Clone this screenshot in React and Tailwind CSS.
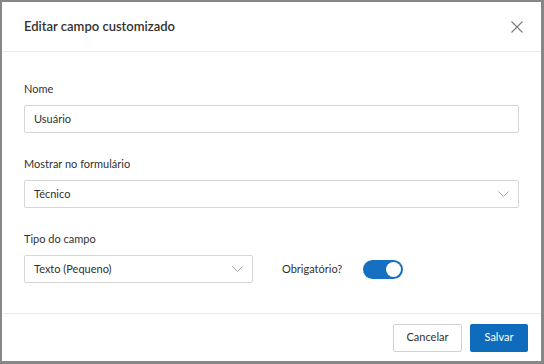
const font = { fontFamily: 'Lato, "Open Sans", sans-serif' }

function Chevron() {
  return (
    <svg width="11" height="7" viewBox="0 0 11 7" fill="none" className="text-[#a6a6a6]">
      <polyline points="0.5,0.5 5.5,5.5 10.5,0.5" stroke="currentColor" strokeWidth="1" />
    </svg>
  )
}

function Field({ label, children }) {
  return (
    <div className="flex flex-col">
      <label className="text-[11px] leading-4 text-[#323130]">{label}</label>
      <div className="mt-[8px]">{children}</div>
    </div>
  )
}

function Select({ value, className = '' }) {
  return (
    <div className={`flex h-[28px] items-center justify-between rounded-[2px] border border-[#d6d6d6] bg-white pl-[9px] pr-[9px] ${className}`}>
      <span className="text-[11px] text-[#323130]">{value}</span>
      <Chevron />
    </div>
  )
}

export default function App() {
  return (
    <div className="h-[364px] w-[544px] bg-[#878787] pl-[2px] pt-[2px]" style={font}>
      <div className="flex h-[359px] w-[539px] flex-col bg-white">
        <div className="flex h-[50px] items-center justify-between border-b border-[#ebebeb] pl-[22px] pr-[18px]">
          <h2 className="text-[13px] font-semibold text-[#323130]">Editar campo customizado</h2>
          <svg width="12" height="12" viewBox="0 0 12 12" className="text-[#7a7a7a]">
            <path d="M0.5 0.5 L11.5 11.5 M11.5 0.5 L0.5 11.5" stroke="currentColor" strokeWidth="1.1" />
          </svg>
        </div>

        <div className="flex flex-1 flex-col gap-[23px] px-[22px] pt-[29px]">
          <Field label="Nome">
            <div className="flex h-[28px] items-center rounded-[2px] border border-[#d6d6d6] pl-[9px]">
              <span className="text-[11px] text-[#323130]">Usuário</span>
            </div>
          </Field>

          <Field label="Mostrar no formulário">
            <Select value="Técnico" />
          </Field>

          <div className="flex flex-col">
            <label className="text-[11px] leading-4 text-[#323130]">Tipo do campo</label>
            <div className="mt-[8px] flex items-center">
              <Select value="Texto (Pequeno)" className="w-[229px]" />
              <span className="ml-[29px] text-[11px] text-[#323130]">Obrigatório?</span>
              <div className="ml-[21px] flex h-[19px] w-[40px] items-center justify-end rounded-full bg-[#1570c2] pr-[2px]">
                <div className="h-[15px] w-[15px] rounded-full bg-white" />
              </div>
            </div>
          </div>
        </div>

        <div className="flex h-[48px] items-center justify-end gap-[8px] border-t border-[#ebebeb] pr-[13px]">
          <button className="h-[28px] w-[69px] rounded-[2px] border border-[#d1d1d1] bg-white text-[11px] text-[#323130]">
            Cancelar
          </button>
          <button className="h-[28px] w-[58px] rounded-[2px] bg-[#0f6cbd] text-[11px] text-white">
            Salvar
          </button>
        </div>
      </div>
    </div>
  )
}
